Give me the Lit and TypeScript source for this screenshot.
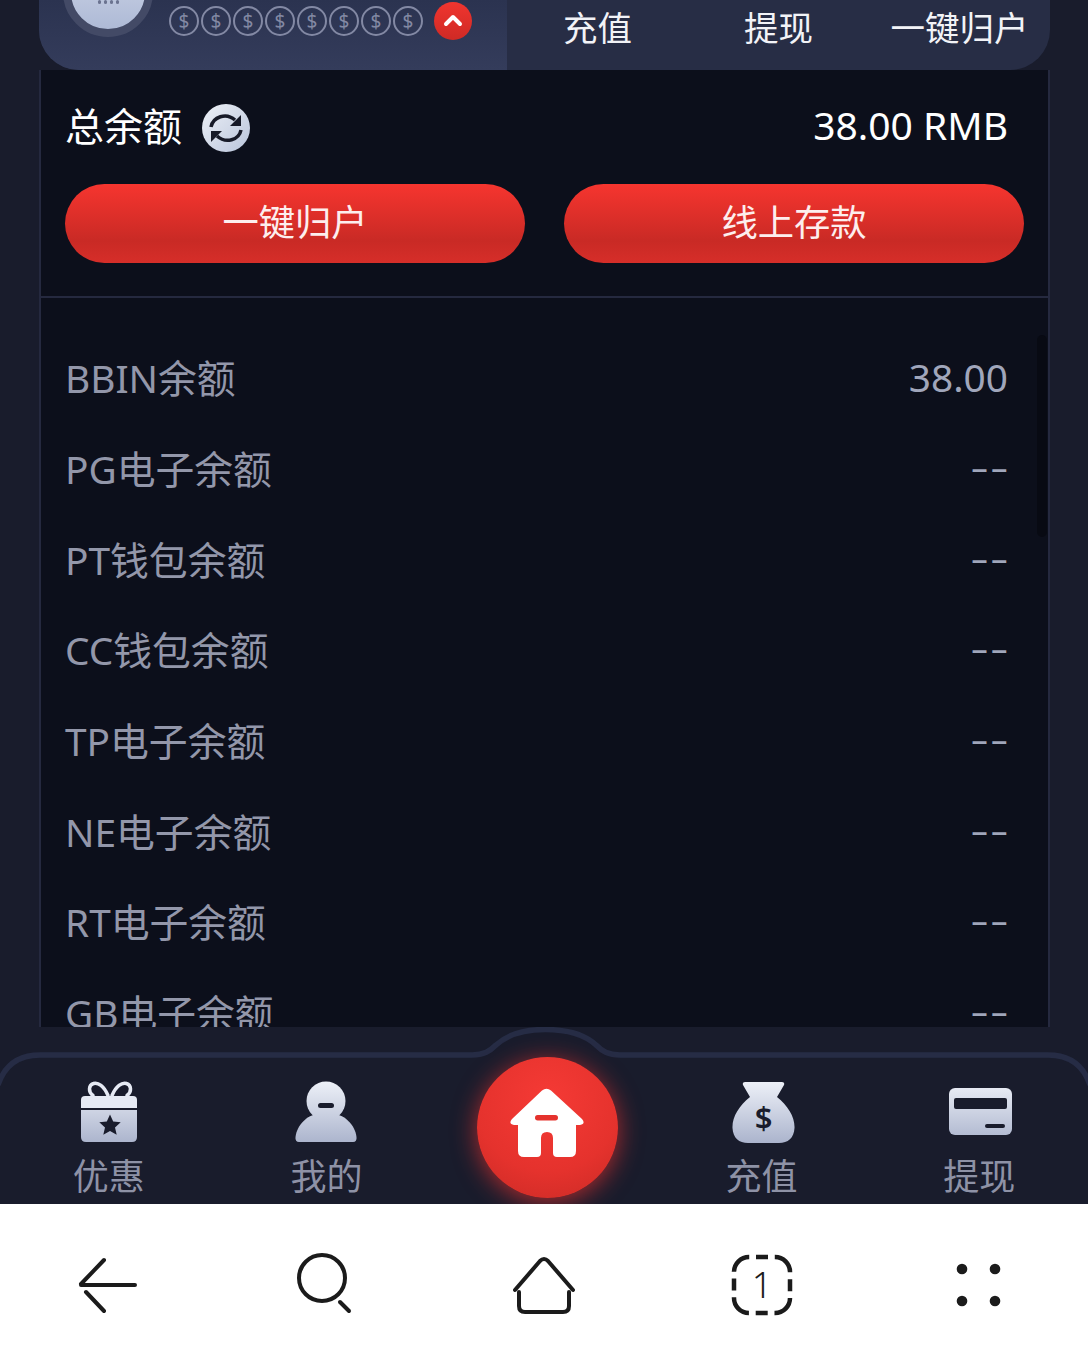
import { LitElement, html, css, svg } from 'lit';
import { customElement } from 'lit/decorators.js';

const BALANCES: [string, string][] = [
  ['BBIN余额', '38.00'],
  ['PG电子余额', ''],
  ['PT钱包余额', ''],
  ['CC钱包余额', ''],
  ['TP电子余额', ''],
  ['NE电子余额', ''],
  ['RT电子余额', ''],
  ['GB电子余额', ''],
];

const iconGrad = svg`
  <defs>
    <linearGradient id="metal" gradientUnits="userSpaceOnUse" x1="0" y1="0" x2="0" y2="64">
      <stop offset="0" stop-color="#eff2f9" />
      <stop offset="1" stop-color="#aab3cc" />
    </linearGradient>
  </defs>
`;

const giftIcon = html`<svg class="icon" viewBox="0 0 64 64">
  ${iconGrad}
  <path d="M31 15.500C27 6 21 2 16.500 3.500C11.500 5 11 12 16 15.500M35 15.500C39 6 45 2 49.500 3.500C54.500 5 55 12 50 15.500" fill="none" stroke="#e6eaf4" stroke-width="3.500" stroke-linecap="round" />
  <path d="M4 28V20Q4 16 8 16H56Q60 16 60 20V28Z" fill="#e6eaf4" />
  <path d="M4 30H60V57Q60 62 55 62H9Q4 62 4 57Z" fill="url(#metal)" />
  <path d="M33 34.500L36.200 41.500L43.700 42.300L38 47.400L39.700 54.800L33 51L26.300 54.800L28 47.400L22.300 42.300L29.800 41.500Z" fill="#191c2c" />
</svg>`;

const userIcon = html`<svg class="icon" viewBox="0 0 64 64">
  ${iconGrad}
  <circle cx="32" cy="21" r="19.500" fill="url(#metal)" />
  <path d="M5 62Q1 62 1.500 57C3 45 13 35 24 34H40C51 35 61 45 62.500 57Q63 62 59 62Z" fill="url(#metal)" />
  <rect x="24" y="23" width="16" height="5" rx="2.500" fill="#191c2c" />
</svg>`;

const bagIcon = html`<svg class="icon" viewBox="0 0 64 64">
  ${iconGrad}
  <path d="M15 2H52Q55 2 54 5L47 17C58 26 65 37 64.500 48C64 58 58 63 49 63H18C9 63 3 58 2.500 48C2 37 9 26 20 17L13 5Q12 2 15 2Z" fill="url(#metal)" />
  <text x="33.500" y="49" text-anchor="middle" class="bag-sign">$</text>
</svg>`;

const cardIcon = html`<svg class="icon" viewBox="0 0 64 64">
  ${iconGrad}
  <rect x="2" y="8" width="63" height="47" rx="6" fill="url(#metal)" />
  <rect x="7" y="18" width="53" height="11" rx="2" fill="#191c2c" />
  <rect x="38" y="44" width="20" height="4" rx="2" fill="#191c2c" />
</svg>`;

@customElement('app-root')
export class AppRoot extends LitElement {
  static styles = css`
    :host {
      display: flex;
      flex-direction: column;
      height: 1366px;
      overflow: hidden;
      background: #191c2c;
      font-family: 'Noto Sans', 'Noto Sans CJK SC', sans-serif;
    }
    .main {
      height: 1027px;
      padding: 0 38px 0 39px;
      display: flex;
      flex-direction: column;
    }
    .header {
      height: 70px;
      flex: none;
      display: flex;
      overflow: hidden;
      border-radius: 0 0 40px 40px;
      background: #272d45;
    }
    .member {
      width: 468px;
      flex: none;
      display: flex;
      align-items: flex-start;
      background: linear-gradient(#2b3350, #343c5b);
    }
    .avatar {
      width: 74px;
      height: 74px;
      flex: none;
      margin: -53px 0 0 24px;
      border: 8px solid #434a66;
      border-radius: 50%;
      background: linear-gradient(#d0d7e8, #aebad6);
      display: flex;
      align-items: flex-start;
      justify-content: center;
    }
    .dots {
      display: flex;
      gap: 3px;
      margin-top: 45px;
    }
    .dots i {
      width: 3px;
      height: 4px;
      background: #6b7390;
      border-radius: 2px;
    }
    .coins {
      display: flex;
      gap: 2px;
      margin: 6px 0 0 16px;
    }
    .coin {
      width: 26px;
      height: 26px;
      border: 2px solid #8389a4;
      border-radius: 50%;
      color: #8389a4;
      font-size: 19px;
      line-height: 26px;
      text-align: center;
    }
    .up {
      width: 38px;
      height: 38px;
      margin: 2px 0 0 11px;
      border-radius: 50%;
      background: linear-gradient(#f0352f, #cf2a25);
      display: flex;
      align-items: center;
      justify-content: center;
    }
    .tabs {
      flex: 1;
      display: grid;
      grid-template-columns: repeat(3, 1fr);
      height: 51px;
      align-items: center;
      text-align: center;
      color: #f2f3f7;
      font-size: 34.500px;
    }
    .panel {
      flex: 1;
      min-height: 0;
      position: relative;
      display: flex;
      flex-direction: column;
      background: #0c0f1b;
      border-left: 2px solid #25293f;
      border-right: 2px solid #25293f;
    }
    .summary {
      flex: none;
      padding: 0 24px 33px 24px;
      border-bottom: 2px solid #25293f;
    }
    .total {
      height: 114px;
      display: flex;
      align-items: center;
      justify-content: space-between;
      padding: 0 16px 0 0;
      color: #fff;
      font-size: 39px;
    }
    .total-text {
      margin-top: -6px;
    }
    .total-label {
      display: flex;
      align-items: center;
      gap: 20px;
    }
    .total-label svg {
      margin-top: 2px;
    }
    .actions {
      display: grid;
      grid-template-columns: 460px 460px;
      gap: 39px;
    }
    .action {
      height: 79px;
      border-radius: 40px;
      background: linear-gradient(#f6352f, #c92a25 72%, #d62e29);
      color: #fdeeee;
      font-size: 36.300px;
      line-height: 77px;
      text-align: center;
    }
    .list {
      flex: 1;
      min-height: 0;
      overflow: hidden;
      padding: 34px 40px 0 24px;
    }
    .row {
      height: 90.700px;
      display: flex;
      align-items: center;
      justify-content: space-between;
      color: #9397aa;
      font-size: 38.800px;
    }
    .row .name {
      margin-top: -2px;
    }
    .row .amount {
      color: #a0a6bb;
    }
    .dashes {
      font-family: 'Liberation Sans', sans-serif;
      font-size: 28px;
      font-weight: 700;
      letter-spacing: 4px;
      margin: 2px -3px 0 0;
      color: #a0a6bb;
    }
    .scrollbar {
      position: absolute;
      right: 1px;
      top: 265px;
      width: 10px;
      height: 202px;
      border-radius: 5px;
      background: #080a13;
    }
    .nav {
      height: 177px;
      flex: none;
      position: relative;
      box-sizing: border-box;
      padding-top: 53px;
      display: grid;
      grid-template-columns: repeat(5, 1fr);
      align-items: start;
      text-align: center;
      overflow: hidden;
    }
    .nav-line {
      position: absolute;
      left: 0;
      top: 0;
      width: 1088px;
      height: 177px;
    }
    .nav-item {
      position: relative;
      display: flex;
      flex-direction: column;
      align-items: center;
      color: #8e92a6;
      font-size: 36px;
      line-height: 44px;
    }
    .icon {
      width: 64px;
      height: 64px;
      margin-bottom: 11px;
      overflow: visible;
    }
    .bag-sign {
      font-family: 'Noto Sans', sans-serif;
      font-size: 31px;
      font-weight: 600;
      fill: #191c2c;
    }
    .home {
      position: relative;
      justify-self: center;
      width: 141px;
      height: 141px;
      margin: -23px 0 0 7px;
      border-radius: 50%;
      background: radial-gradient(circle at 50% 30%, #f53a35, #e5322d 60%, #c92a25);
      box-shadow: 0 4px 24px rgba(240, 50, 45, 0.7);
      display: flex;
      align-items: center;
      justify-content: center;
    }
    .home svg {
      margin-bottom: 9px;
    }
    .browser {
      flex: 1;
      background: #fff;
      display: grid;
      grid-template-columns: repeat(5, 1fr);
      place-items: center;
      padding-bottom: 0;
    }
    .browser svg {
      width: 72px;
      height: 72px;
      margin-bottom: 1px;
      overflow: visible;
    }
    .browser text {
      font-family: 'Noto Sans', sans-serif;
      font-size: 36px;
      font-weight: 300;
      fill: #1b1b1b;
    }
    .line {
      fill: none;
      stroke: #1b1b1b;
      stroke-width: 4px;
      stroke-linecap: round;
      stroke-linejoin: round;
    }
  `;

  render() {
    return html`
      <div class="main">
        <div class="header">
          <div class="member">
            <div class="avatar">
              <div class="dots"><i></i><i></i><i></i><i></i></div>
            </div>
            <div class="coins">
              ${Array.from({ length: 8 }, () => html`<div class="coin">$</div>`)}
            </div>
            <div class="up">
              <svg width="20" height="14" viewBox="0 0 20 14">
                <path d="M3 10L10 3L17 10" fill="none" stroke="#fff" stroke-width="4" stroke-linecap="round" stroke-linejoin="round" />
              </svg>
            </div>
          </div>
          <div class="tabs">
            <span>充值</span>
            <span>提现</span>
            <span>一键归户</span>
          </div>
        </div>

        <div class="panel">
          <div class="summary">
            <div class="total">
              <div class="total-label">
                <span class="total-text">总余额</span>
                <svg width="48" height="48" viewBox="0 0 48 48">
                  <defs>
                    <linearGradient id="refresh" x1="0" y1="0" x2="1" y2="1">
                      <stop offset="0" stop-color="#eef1f7" />
                      <stop offset="1" stop-color="#b9c4db" />
                    </linearGradient>
                  </defs>
                  <circle cx="24" cy="24" r="24" fill="url(#refresh)" />
                  <path d="M9 23C11 13 24 8 33 16" fill="none" stroke="#171a28" stroke-width="3.500" />
                  <path d="M39 11V22H28Z" fill="#171a28" />
                  <path d="M39 26C37 36 24 40 15 32" fill="none" stroke="#171a28" stroke-width="3.500" />
                  <path d="M9 38V27H20Z" fill="#171a28" />
                </svg>
              </div>
              <span class="total-text">38.00 RMB</span>
            </div>
            <div class="actions">
              <div class="action">一键归户</div>
              <div class="action">线上存款</div>
            </div>
          </div>
          <div class="list">
            ${BALANCES.map(
              ([name, amount]) => html`
                <div class="row">
                  <span class="name">${name}</span>
                  ${amount
                    ? html`<span class="amount">${amount}</span>`
                    : html`<span class="dashes">––</span>`}
                </div>
              `,
            )}
          </div>
          <div class="scrollbar"></div>
        </div>
      </div>

      <div class="nav">
        <svg class="nav-line" viewBox="0 0 1088 177">
          <path d="M-2 58C4 40 16 28 40 28H472C484 28 490 24 496 18C508 7 524 2.500 545 2.500C566 2.500 584 7 596 18C602 24 608 28 620 28H1048C1072 28 1084 40 1090 58" fill="none" stroke="#262c45" stroke-width="5.500" />
        </svg>
        <div class="nav-item">${giftIcon}<span>优惠</span></div>
        <div class="nav-item">${userIcon}<span>我的</span></div>
        <div class="home">
          <svg width="76" height="70" viewBox="0 0 76 70">
            <path d="M33 2.500Q37.500 -1 42 2.500L73 31Q77 36 71 37H67V63Q67 69 61 69H48Q44 69 44 65V50Q44 44 38 44Q32 44 32 50V65Q32 69 28 69H15Q9 69 9 63V37H5Q-1 36 3 31Z" fill="#fff" />
            <rect x="26" y="27" width="23" height="5.500" rx="2.700" fill="#e5322d" />
          </svg>
        </div>
        <div class="nav-item">${bagIcon}<span>充值</span></div>
        <div class="nav-item">${cardIcon}<span>提现</span></div>
      </div>

      <div class="browser">
        <svg viewBox="0 0 72 72">
          <path class="line" d="M8 36H62M8 35L31 11M13 43L31 62" />
        </svg>
        <svg viewBox="0 0 72 72">
          <ellipse class="line" cx="32" cy="29" rx="23" ry="23" />
          <path class="line" d="M50 53L59 62" />
        </svg>
        <svg viewBox="0 0 72 72">
          <path class="line" d="M7 41L32 12Q36 8 40 12L65 41M11 43V57Q11 63 17 63H55Q61 63 61 57V43" />
        </svg>
        <svg viewBox="0 0 72 72">
          <rect x="8" y="8" width="56" height="56" rx="15" fill="none" stroke="#1b1b1b" stroke-width="4.500" stroke-dasharray="12 6.780 24 6.780" stroke-dashoffset="-7" />
          <text x="36" y="49" text-anchor="middle">1</text>
        </svg>
        <svg viewBox="0 0 72 72">
          <circle cx="19" cy="20" r="5.300" fill="#1b1b1b" />
          <circle cx="52" cy="20" r="5.300" fill="#1b1b1b" />
          <circle cx="19" cy="52" r="5.300" fill="#1b1b1b" />
          <circle cx="52" cy="52" r="5.300" fill="#1b1b1b" />
        </svg>
      </div>
    `;
  }
}
